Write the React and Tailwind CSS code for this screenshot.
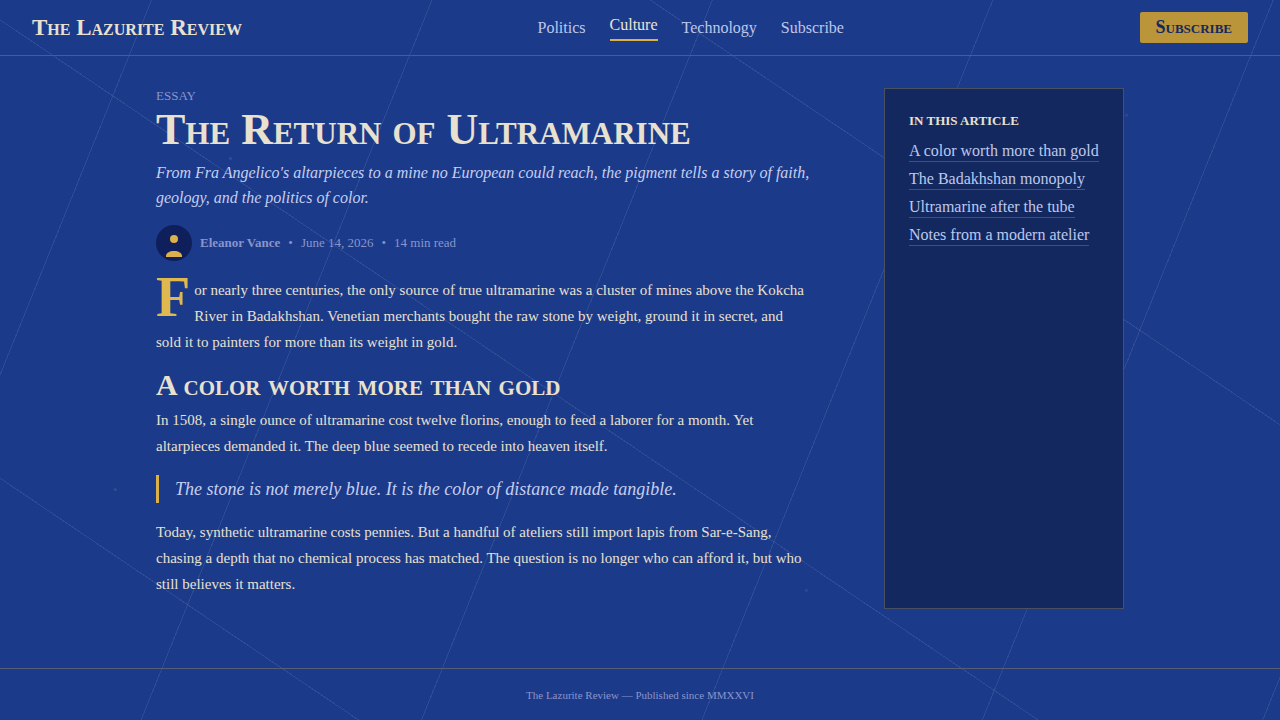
import React from "react";

const navLinks = ["Politics", "Culture", "Technology", "Subscribe"];

const sections = [
    "A color worth more than gold",
    "The Badakhshan monopoly",
    "Ultramarine after the tube",
    "Notes from a modern atelier",
];

const Header = () => {
    return (
        <header className="flex items-center justify-between h-14 px-8 border-b border-[#4b5c85]">
            <a href="#" className="text-[23px] leading-7 font-bold [font-variant-caps:small-caps] text-[#e8e1cf]">The Lazurite Review</a>
            <nav className="flex items-center gap-6 text-[16px] leading-5">
                {
                    navLinks.map((link) => (
                        <a
                            key={link}
                            href="#"
                            className={link === "Culture" ? "text-[#ebe5d5] border-b-2 border-[#ddb04a] pb-1" : "text-[#bcc8ec]"}
                        >
                            {link}
                        </a>
                    ))
                }
            </nav>
            <button className="bg-[#ba953a] text-[#142860] text-[18px] leading-[23px] font-bold [font-variant-caps:small-caps] px-4 py-1 rounded-xs">Subscribe</button>
        </header>
    );
};

const Byline = () => {
    return (
        <div className="flex items-center gap-2 mt-[15px] text-[13px] text-[#8995ca]">
            <svg className="w-9 h-9" viewBox="0 0 36 36" aria-hidden="true">
                <circle cx="18" cy="18" r="18" fill="#0f1f5c" />
                <circle cx="18" cy="14" r="4" fill="#ddb04a" />
                <path d="M10 32v-1c0-3 3.5-5 8-5s8 2 8 5v1z" fill="#ddb04a" />
            </svg>
            <span className="font-semibold">Eleanor Vance</span>
            <span>•</span>
            <span>June 14, 2026</span>
            <span>•</span>
            <span>14 min read</span>
        </div>
    );
};

const Article = () => {
    return (
        <article className="text-[15px] leading-[26px] text-[#e8e1cf] pb-3">
            <p className="text-[13px] leading-4 mb-1 text-[#8995ca]">ESSAY</p>
            <h1 className="text-[44px] leading-[44px] mb-2 font-bold [font-variant-caps:small-caps]">The Return of Ultramarine</h1>
            <p className="text-[16px] leading-[25px] italic text-[#c5cff0]">From Fra Angelico's altarpieces to a mine no European could reach, the pigment tells a story of faith, geology, and the politics of color.</p>
            <Byline />
            <p className="mt-4 pr-4">
                <span className="float-left mr-1 text-[56px] leading-[40px] font-bold text-[#dfb850]">F</span>
                or nearly three centuries, the only source of true ultramarine was a cluster of mines above the Kokcha River in Badakhshan. Venetian merchants bought the raw stone by weight, ground it in secret, and sold it to painters for more than its weight in gold.
            </p>
            <h2 className="mt-4 mb-2 text-[30px] leading-7 font-bold [font-variant-caps:small-caps]">A color worth more than gold</h2>
            <p className="pr-4">In 1508, a single ounce of ultramarine cost twelve florins, enough to feed a laborer for a month. Yet altarpieces demanded it. The deep blue seemed to recede into heaven itself.</p>
            <blockquote className="my-4 pl-4 border-l-3 border-[#ddb04a] text-[18px] leading-7 italic text-[#c5cff0]">The stone is not merely blue. It is the color of distance made tangible.</blockquote>
            <p className="pr-4">Today, synthetic ultramarine costs pennies. But a handful of ateliers still import lapis from Sar-e-Sang, chasing a depth that no chemical process has matched. The question is no longer who can afford it, but who still believes it matters.</p>
        </article>
    );
};

const Contents = () => {
    return (
        <aside className="bg-[#142860] border border-[#49505f] p-6">
            <h2 className="text-[13px] leading-4 font-bold text-[#e8e1cf] mb-3">IN THIS ARTICLE</h2>
            <ul className="text-[16px] leading-5">
                {
                    sections.map((section) => (
                        <li key={section} className="mb-[7px]">
                            <a href="#" className="inline-block whitespace-nowrap text-[#bcc8ec] border-b border-[#49505f]">{section}</a>
                        </li>
                    ))
                }
            </ul>
        </aside>
    );
};

const App = () => {
    return (
        <div className="min-h-screen flex flex-col bg-[#1c3a8a] bg-[radial-gradient(circle_at_18%_22%,#344c88_1px,transparent_2px),radial-gradient(circle_at_9%_68%,#344c88_1px,transparent_2px),radial-gradient(circle_at_88%_16%,#304885_1px,transparent_2px),radial-gradient(circle_at_63%_82%,#304885_1px,transparent_2px),repeating-linear-gradient(112deg,transparent_0_140px,#ffffff16_140px_141px,transparent_141px_260px),repeating-linear-gradient(34deg,transparent_0_200px,#ffffff16_200px_201px,transparent_201px_380px)] font-['Liberation_Serif',serif]">
            <Header />
            <main className="flex-1 w-full max-w-[1032px] mx-auto px-8 pt-8">
                <div className="grid grid-cols-[1fr_240px] gap-[60px]">
                    <Article />
                    <Contents />
                </div>
            </main>
            <footer className="border-t border-[#555d78] pt-[17px] pb-4 text-center text-[11px] leading-[18px] text-[#8995ca]">
                The Lazurite Review — Published since MMXXVI
            </footer>
        </div>
    );
};

export default App;
